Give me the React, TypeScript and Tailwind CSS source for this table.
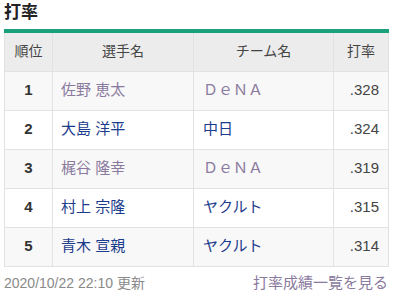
import React from "react";

const rows = [
  { rank: 1, name: "佐野 恵太", team: "ＤｅＮＡ", rate: ".328", visited: true },
  { rank: 2, name: "大島 洋平", team: "中日", rate: ".324", visited: false },
  { rank: 3, name: "梶谷 隆幸", team: "ＤｅＮＡ", rate: ".319", visited: true },
  { rank: 4, name: "村上 宗隆", team: "ヤクルト", rate: ".315", visited: false },
  { rank: 5, name: "青木 宣親", team: "ヤクルト", rate: ".314", visited: false },
];

export default function App() {
  return (
    <div
      className="w-[394px] h-[302px] bg-white pl-[4px] pr-[6px] text-[#333]"
      style={{ fontFamily: '"Liberation Sans", "Noto Sans CJK JP", sans-serif' }}
    >
      <div className="h-[29px] pt-[3px] text-[17px] font-bold leading-[20px] text-[#222]">打率</div>
      <table className="w-[384px] border-collapse table-fixed border-t-[4px] border-t-[#1aa07a]">
        <colgroup>
          <col className="w-[48px]" />
          <col className="w-[141px]" />
          <col className="w-[140px]" />
          <col className="w-[55px]" />
        </colgroup>
        <thead>
          <tr className="h-[40px] bg-[#ececec] text-[14px] text-[#444]">
            <th className="font-normal border border-[#e2e2e2] border-t-0">順位</th>
            <th className="font-normal border border-[#e2e2e2] border-t-0">選手名</th>
            <th className="font-normal border border-[#e2e2e2] border-t-0">チーム名</th>
            <th className="font-normal border border-[#e2e2e2] border-t-0">打率</th>
          </tr>
        </thead>
        <tbody>
          {rows.map((r, i) => {
            const color = r.visited ? "text-[#8a7a9e]" : "text-[#1b3b8c]";
            return (
              <tr key={r.rank} className={`h-[39px] ${i % 2 === 0 ? "bg-[#f8f8f8]" : "bg-white"}`}>
                <td className="border border-[#e2e2e2] text-center text-[15px] font-bold text-[#333]">{r.rank}</td>
                <td className={`border border-[#e2e2e2] pl-[8px] text-[15px] ${color}`}>{r.name}</td>
                <td className={`border border-[#e2e2e2] pl-[9px] text-[15px] ${color}`}>{r.team}</td>
                <td className="border border-[#e2e2e2] pr-[9px] text-right text-[15px] text-[#444]">{r.rate}</td>
              </tr>
            );
          })}
        </tbody>
      </table>
      <div className="w-[384px] mt-[7px] flex justify-between items-center h-[20px]">
        <span className="text-[14px] text-[#8a8a8a]">2020/10/22 22:10 更新</span>
        <span className="text-[15px] text-[#8a7a9e]">打率成績一覧を見る</span>
      </div>
    </div>
  );
}
